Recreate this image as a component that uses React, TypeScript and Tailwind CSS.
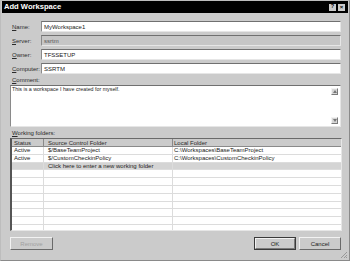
import React from "react";

const font = { fontFamily: '"Liberation Sans", Arial, sans-serif' };

function Field({ label, value, disabled, mt }: { label: string; value: string; disabled?: boolean; mt: string }) {
  return (
    <div className={`flex items-center h-[11px] ${mt}`}>
      <div className="w-[31px] pl-[2px] text-[6px] leading-none text-[#2a2a2a]">
        <span className="underline">{label[0]}</span>
        {label.slice(1)}
      </div>
      <div
        className={`flex-1 h-[11px] border-t border-l border-t-[#707070] border-l-[#8a8a8a] border-b border-r border-b-[#e6e6e6] border-r-[#e6e6e6] pl-[2px] flex items-center text-[6px] leading-none ${
          disabled ? "bg-[#c6c6c6] text-[#555]" : "bg-white text-[#222]"
        }`}
      >
        {value}
      </div>
    </div>
  );
}

function Btn({ children, def, disabled, w }: { children: React.ReactNode; def?: boolean; disabled?: boolean; w: string }) {
  return (
    <div
      className={`${w} h-[13px] flex items-center justify-center text-[6px] leading-none border ${
        def ? "border-[#3a3a3a]" : "border-t-[#f2f2f2] border-l-[#f2f2f2] border-r-[#6a6a6a] border-b-[#6a6a6a]"
      } ${disabled ? "text-[#a0a0a0]" : "text-[#222]"} bg-[#cbcbcb]`}
    >
      {def ? (
        <div className="w-full h-full border border-t-[#f2f2f2] border-l-[#f2f2f2] border-r-[#7a7a7a] border-b-[#7a7a7a] flex items-center justify-center">
          {children}
        </div>
      ) : (
        children
      )}
    </div>
  );
}

const rows: { s: string; f: string; l: string; click?: boolean }[] = [
  { s: "Active", f: "$/BaseTeamProject", l: "C:\\Workspaces\\BaseTeamProject" },
  { s: "Active", f: "$/CustomCheckinPolicy", l: "C:\\Workspaces\\CustomCheckinPolicy" },
  { s: "", f: "Click here to enter a new working folder", l: "", click: true },
  { s: "", f: "", l: "" },
  { s: "", f: "", l: "" },
  { s: "", f: "", l: "" },
  { s: "", f: "", l: "" },
  { s: "", f: "", l: "" },
  { s: "", f: "", l: "" },
  { s: "", f: "", l: "" },
  { s: "", f: "", l: "" },
  { s: "", f: "", l: "" },
];

export default function App() {
  return (
    <div style={font} className="w-[350px] h-[261px] bg-[#cbcbcb] border border-t-[#bdbdbd] border-l-[#bdbdbd] border-r-[#8a8a8a] border-b-[#8a8a8a] flex flex-col overflow-hidden relative">
      {/* title bar */}
      <div className="h-[12px] mx-[1px] bg-black flex items-center justify-between">
        <span className="pl-[2px] text-white font-bold text-[7.6px] leading-none">Add Workspace</span>
        <div className="flex gap-[2px] pr-[3px]">
          <div className="w-[7px] h-[7px] bg-[#cbcbcb] flex items-center justify-center text-[5.5px] font-bold leading-none text-black">?</div>
          <div className="w-[7px] h-[7px] bg-[#cbcbcb] flex items-center justify-center text-[6px] font-bold leading-none text-black">×</div>
        </div>
      </div>

      <div className="flex flex-col pl-[9px] pr-[8px]">
        <Field label="Name:" value="MyWorkspace1" mt="mt-[8px]" />
        <Field label="Server:" value="ssrtm" disabled mt="mt-[3px]" />
        <Field label="Owner:" value="TFSSETUP" mt="mt-[3px]" />
        <Field label="Computer:" value="SSRTM" mt="mt-[3px]" />

        <div className="mt-[3px] h-[7px] text-[6px] leading-none text-[#2a2a2a] pl-[2px]">
          <span className="underline">C</span>omment:
        </div>
        <div className="mt-[1px] h-[42px] bg-white border-t border-l border-t-[#707070] border-l-[#8a8a8a] border-b border-r border-b-[#e6e6e6] border-r-[#e6e6e6] flex">
          <div className="flex-1 pl-[1px] pt-[1px] text-[5.3px] leading-none text-[#222]">This is a workspace I have created for myself.</div>
          <div className="w-[9px] flex flex-col justify-between py-[2px] pr-[1px]">
            <div className="w-[7px] h-[7px] bg-[#d6d6d6] border border-t-[#f2f2f2] border-l-[#f2f2f2] border-r-[#7a7a7a] border-b-[#7a7a7a] flex items-center justify-center">
              <svg width="4" height="3" viewBox="0 0 4 3"><path d="M0 3 L2 0 L4 3 Z" fill="#777" /></svg>
            </div>
            <div className="w-[7px] h-[7px] bg-[#d6d6d6] border border-t-[#f2f2f2] border-l-[#f2f2f2] border-r-[#7a7a7a] border-b-[#7a7a7a] flex items-center justify-center">
              <svg width="4" height="3" viewBox="0 0 4 3"><path d="M0 0 L2 3 L4 0 Z" fill="#777" /></svg>
            </div>
          </div>
        </div>

        <div className="mt-[3px] h-[8px] text-[6px] leading-none text-[#2a2a2a] pl-[2px]">
          <span className="underline">W</span>orking folders:
        </div>
        <div className="h-[93px] bg-white border-t border-l-2 border-t-[#6a6a6a] border-l-[#555] border-b border-r border-b-[#e6e6e6] border-r-[#e6e6e6] overflow-hidden flex flex-col mr-[-1px]">
          <div className="h-[8px] shrink-0 flex bg-[#cbcbcb] text-[6px] leading-none text-[#2a2a2a] border-b border-b-[#8a8a8a]">
            <div className="w-[32px] pl-[2px] flex items-center border-r border-r-[#8a8a8a]">Status</div>
            <div className="w-[129px] pl-[4px] flex items-center border-r border-r-[#8a8a8a]">Source Control Folder</div>
            <div className="flex-1 pl-[1px] flex items-center">Local Folder</div>
          </div>
          {rows.map((r, i) => (
            <div
              key={i}
              className={`h-[7.8px] shrink-0 flex text-[6px] leading-none text-[#222] border-b border-b-[#dcdcdc] ${r.click ? "bg-[#d4d4d4]" : "bg-white"}`}
            >
              <div className="w-[32px] pl-[2px] flex items-center border-r border-r-[#dcdcdc]">{r.s}</div>
              <div className="w-[129px] pl-[4px] flex items-center border-r border-r-[#dcdcdc]">{r.f}</div>
              <div className="flex-1 pl-[1px] flex items-center">{r.l}</div>
            </div>
          ))}
        </div>

        <div className="mt-[6px] flex items-center">
          <Btn w="w-[43px]" disabled>Remove</Btn>
          <div className="flex-1" />
          <Btn w="w-[42px]" def>OK</Btn>
          <div className="w-[3px]" />
          <Btn w="w-[42px]">Cancel</Btn>
        </div>
      </div>

      <svg className="absolute right-[1px] bottom-[1px]" width="8" height="8" viewBox="0 0 8 8">
        <path d="M7 1 L1 7 M7 4 L4 7 M7 6 L6 7" stroke="#8a8a8a" strokeWidth="0.8" />
      </svg>
    </div>
  );
}
